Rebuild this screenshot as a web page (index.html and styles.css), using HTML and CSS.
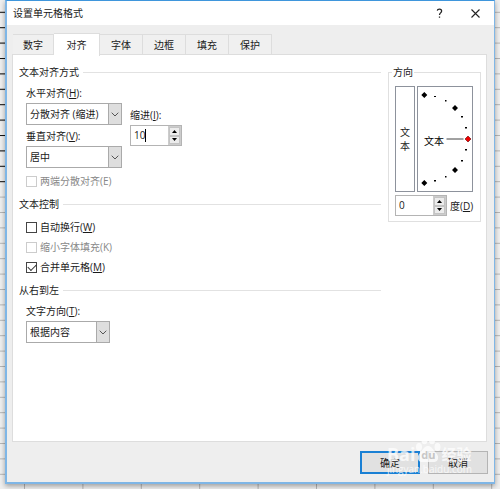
FILE: index.html
```html
<!DOCTYPE html>
<html lang="zh-CN">
<head>
<meta charset="utf-8">
<meta name="viewport" content="width=device-width, initial-scale=1">
<title>设置单元格格式</title>
<link rel="stylesheet" href="styles.css">
</head>
<body>
<svg class="sheet" aria-hidden="true">
  <defs>
    <pattern id="rows" width="60" height="15.4" y="11.8" patternUnits="userSpaceOnUse"><rect width="60" height="1" fill="#b4b4b4"/></pattern>
    <pattern id="bold-rows" width="60" height="15.4" y="11.8" patternUnits="userSpaceOnUse"><rect width="60" height="1" fill="#111"/></pattern>
    <pattern id="cols" width="58.4" height="20" x="24" patternUnits="userSpaceOnUse"><rect width="1" height="20" fill="#b4b4b4"/></pattern>
  </defs>
  <rect width="100%" height="482" fill="url(#rows)"/>
  <rect width="8" height="188" fill="url(#bold-rows)"/>
  <rect y="480" width="100%" height="20" fill="url(#cols)"/>
</svg>
<main class="dialog">
  <header class="titlebar">
    <h1 class="title">设置单元格格式</h1>
    <button class="tool" type="button" aria-label="帮助">
      <svg width="9" height="11" viewBox="0 0 9 11"><path d="M2.3 2.6C2.5.8 6.6.6 6.6 3c0 1.8-2.1 2-2.1 4M4.5 8.4v1.4" fill="none" stroke="#222" stroke-width="1.3"/></svg>
    </button>
    <button class="tool" type="button" aria-label="关闭">
      <svg width="9" height="9" viewBox="0 0 9 9"><path d="M.5.5l8 8M8.5.5l-8 8" fill="none" stroke="#222" stroke-width="1.1"/></svg>
    </button>
  </header>
  <nav class="tabs" role="tablist">
    <button class="tab" role="tab" type="button">数字</button>
    <button class="tab tab-active" role="tab" type="button" aria-selected="true">对齐</button>
    <button class="tab" role="tab" type="button">字体</button>
    <button class="tab" role="tab" type="button">边框</button>
    <button class="tab" role="tab" type="button">填充</button>
    <button class="tab" role="tab" type="button">保护</button>
  </nav>
  <div class="panel">
    <div class="settings">
      <section>
        <h2 class="heading">文本对齐方式</h2>
        <div class="group align">
          <div class="fields">
            <label class="label" for="horizontal">水平对齐(<u>H</u>):</label>
            <div class="combo">
              <select id="horizontal"><option>分散对齐 (缩进)</option></select>
              <span class="combo-arrow"><svg width="8" height="5" viewBox="0 0 8 5"><path d="M.7.7L4 4 7.300.7" fill="none" stroke="#555"/></svg></span>
            </div>
            <label class="label" for="vertical">垂直对齐(<u>V</u>):</label>
            <div class="combo">
              <select id="vertical"><option>居中</option></select>
              <span class="combo-arrow"><svg width="8" height="5" viewBox="0 0 8 5"><path d="M.7.7L4 4 7.300.7" fill="none" stroke="#555"/></svg></span>
            </div>
          </div>
          <div class="indent">
            <label class="label" for="indent">缩进(<u>I</u>):</label>
            <div class="spin">
              <input id="indent" type="text" value="10">
              <span class="caret"></span>
              <span class="spin-buttons">
                <button type="button" aria-label="增加缩进"><svg width="5" height="3" viewBox="0 0 5 3"><path d="M2.500 0L5 3H0z"/></svg></button>
                <button type="button" aria-label="减少缩进"><svg width="5" height="3" viewBox="0 0 5 3"><path d="M0 0h5L2.500 3z"/></svg></button>
              </span>
            </div>
          </div>
          <label class="check check-off"><input type="checkbox" disabled><span>两端分散对齐(E)</span></label>
        </div>
      </section>
      <section>
        <h2 class="heading">文本控制</h2>
        <div class="group checks">
          <label class="check"><input type="checkbox"><span>自动换行(<u>W</u>)</span></label>
          <label class="check check-off"><input type="checkbox" disabled><span>缩小字体填充(K)</span></label>
          <label class="check"><input type="checkbox" checked><span>合并单元格(<u>M</u>)</span></label>
        </div>
      </section>
      <section>
        <h2 class="heading">从右到左</h2>
        <div class="group">
          <label class="label" for="direction">文字方向(<u>T</u>):</label>
          <div class="combo combo-short">
            <select id="direction"><option>根据内容</option></select>
            <span class="combo-arrow"><svg width="8" height="5" viewBox="0 0 8 5"><path d="M.7.7L4 4 7.300.7" fill="none" stroke="#555"/></svg></span>
          </div>
        </div>
      </section>
    </div>
    <fieldset class="orientation">
      <legend>方向</legend>
      <div class="dials">
        <button class="upright" type="button">文<br>本</button>
        <svg class="dial" width="54" height="104" viewBox="418 87 54 104" role="img" aria-label="文本">
          <path d="M446.500 139h17" stroke="#444"/>
          <text x="424" y="145">文本</text>
          <g>
            <path d="M424.300 92l3 3-3 3-3-3zM455 105l3 3-3 3-3-3zM455 167l3 3-3 3-3-3zM424.300 180l3 3-3 3-3-3z"/>
            <path d="M434 96h2v1h-2zM445 100h1.500v1.500H445zM461 116h2v1.500h-2zM465 127h2v1.500h-2zM465 149h2v1.500h-2zM461 160h2v1.500h-2zM445 176h1.500v1.500H445zM434 180h2v1.500h-2z"/>
          </g>
          <path d="M468 136l3 3-3 3-3-3z" fill="#e00" stroke="#600" stroke-width=".6"/>
        </svg>
      </div>
      <div class="degrees">
        <div class="spin">
          <input id="degrees" type="text" value="0">
          <span class="spin-buttons">
            <button type="button" aria-label="增加角度"><svg width="5" height="3" viewBox="0 0 5 3"><path d="M2.500 0L5 3H0z"/></svg></button>
            <button type="button" aria-label="减少角度"><svg width="5" height="3" viewBox="0 0 5 3"><path d="M0 0h5L2.500 3z"/></svg></button>
          </span>
        </div>
        <label for="degrees">度(<u>D</u>)</label>
      </div>
    </fieldset>
  </div>
  <footer class="actions">
    <button class="action action-default" type="button">确定</button>
    <button class="action" type="button">取消</button>
    <div class="watermark">
      <div class="brand">
        <span>Bai</span>
        <span class="paw">
          <svg width="26" height="28" viewBox="0 0 26 28" fill="#fff"><ellipse cx="4" cy="12" rx="3" ry="4"/><ellipse cx="9.500" cy="5" rx="3" ry="4.300"/><ellipse cx="17" cy="5" rx="3" ry="4.300"/><ellipse cx="22.500" cy="12" rx="3" ry="4"/><path d="M13 11c4 0 5 4 8 7 4 4 2 9-2 9H7c-4 0-6-5-2-9 3-3 4-7 8-7z"/></svg>
          <span class="du">du</span>
        </span>
        <span class="brand-cn">经验</span>
      </div>
      <div class="site">jingyan.baidu.com</div>
    </div>
  </footer>
</main>
</body>
</html>
```

FILE: styles.css
```css
* {
  box-sizing: border-box;
}

body {
  margin: 0;
  padding: 0 5px 5px;
  min-height: 100vh;
  display: flex;
  background: #efefef;
  color: #1a1a1a;
  font: 10px/14px "Open Sans", "Noto Sans CJK SC", sans-serif;
}

button,
input,
select {
  margin: 0;
  padding: 0;
  border: 0;
  border-radius: 0;
  color: inherit;
  font: inherit;
}

.sheet {
  position: absolute;
  inset: 0;
  width: 100%;
  height: 100%;
}

.dialog {
  position: relative;
  flex: 1;
  display: flex;
  flex-direction: column;
  background: #eee;
  border: solid #7fb6e6;
  border-width: 1px 1px 2px 2px;
  border-top-color: #3f96dc;
  box-shadow: 0 2px 5px rgba(0, 0, 0, 0.35);
}

.titlebar {
  display: flex;
  align-items: center;
  height: 24px;
  padding: 0 10px 0 6px;
  background: #fff;
}

.title {
  flex: 1;
  margin: 0;
  font-size: 10px;
  font-weight: 400;
}

.tool {
  display: grid;
  place-items: center;
  width: 18px;
  height: 18px;
  background: none;
}

.tool + .tool {
  margin-left: 18px;
}

.tabs {
  display: flex;
  align-items: flex-end;
  height: 30px;
  padding-left: 6px;
}

.tab {
  width: 43px;
  height: 21px;
  background: #f0f0f0;
  border: 1px solid #ddd;
  border-width: 1px 1px 0 0;
}

.tab:first-child {
  width: 41px;
}

.tab-active {
  z-index: 1;
  width: 46px;
  height: 23px;
  margin-bottom: -1px;
  background: #fff;
}

.panel {
  flex: 1;
  display: grid;
  grid-template-columns: 1fr 93px;
  column-gap: 7px;
  align-items: start;
  margin: -1px 7px 0 5px;
  padding: 10px 5px 10px 6px;
  background: #fff;
  border: 1px solid #ddd;
}

.settings {
  display: grid;
  gap: 9px;
}

.heading {
  display: flex;
  align-items: center;
  gap: 4px;
  margin: 0;
  font-size: 10px;
  font-weight: 400;
}

.heading::after {
  content: "";
  flex: 1;
  height: 1px;
  background: #e2e2e2;
}

.group {
  padding: 7px 7px 0;
}

.align {
  display: grid;
  grid-template-columns: 96px 52px;
  column-gap: 8px;
}

.indent {
  padding-top: 22px;
}

.align .check {
  grid-column: 1 / -1;
  margin-top: 6px;
}

.label {
  display: block;
  margin-bottom: 3px;
}

.combo + .label {
  margin-top: 4px;
}

.combo {
  position: relative;
  height: 22px;
}

.combo-short {
  width: 84px;
}

.combo select {
  appearance: none;
  width: 100%;
  height: 100%;
  padding: 0 16px 0 3px;
  background: #fff;
  border: 1px solid #aaa;
}

.combo-arrow {
  position: absolute;
  inset: 0 0 0 auto;
  display: grid;
  place-items: center;
  width: 14px;
  background: #dedede;
  border: 1px solid #aaa;
  pointer-events: none;
}

.spin {
  position: relative;
  display: flex;
  width: 52px;
  height: 21px;
  background: #fff;
  border: 1px solid #b4b4b4;
}

.spin input {
  flex: 1;
  min-width: 0;
  padding: 0 0 2px 3px;
  background: none;
}

.caret {
  position: absolute;
  top: 3px;
  left: 14px;
  width: 1px;
  height: 13px;
  background: #000;
}

.spin-buttons {
  display: grid;
  width: 13px;
  border: 1px solid #ccc;
}

.spin-buttons button {
  display: grid;
  place-items: center;
  min-height: 0;
  background: #ececec;
  border: 1px solid #c4c4c4;
}

.checks {
  display: grid;
  gap: 6px;
  padding-top: 9px;
}

.check {
  display: flex;
  align-items: center;
  gap: 3px;
}

.check input {
  appearance: none;
  display: grid;
  place-items: center;
  width: 11px;
  height: 11px;
  background: #fff;
  border: 1px solid #444;
}

.check input:checked::after {
  content: "";
  width: 7px;
  height: 4px;
  margin-bottom: 2px;
  border: solid #333;
  border-width: 0 0 1px 1px;
  transform: rotate(-45deg);
}

.check-off {
  color: #888;
}

.check-off input {
  border-color: #ccc;
}

.orientation {
  min-width: 0;
  margin: 0;
  padding: 7px 6px 5px;
  border: 1px solid #e0e0e0;
}

.orientation legend {
  margin-left: -3px;
  padding: 0 1px;
}

.dials {
  display: flex;
  gap: 2px;
}

.upright {
  width: 20px;
  height: 106px;
  background: #fff;
  border: 1px solid #8d929c;
}

.dial {
  box-sizing: content-box;
  border: 1px solid #8d929c;
}

.degrees {
  display: flex;
  align-items: center;
  gap: 3px;
  margin-top: 3px;
  white-space: nowrap;
}

.actions {
  position: relative;
  display: flex;
  justify-content: flex-end;
  gap: 8px;
  padding: 9px 6px 8px;
}

.action {
  width: 60px;
  height: 23px;
  background: #e1e1e1;
  border: 1px solid #b4b4b4;
}

.action-default {
  border: 2px solid #1a80d4;
}

.watermark {
  position: absolute;
  right: 22px;
  bottom: 6px;
  color: #fff;
  opacity: 0.75;
  pointer-events: none;
}

.brand {
  display: flex;
  align-items: flex-end;
  font-size: 18px;
  font-weight: 700;
  line-height: 17px;
}

.paw {
  position: relative;
  height: 28px;
}

.paw svg {
  display: block;
}

.du {
  position: absolute;
  inset: auto 0 2px;
  color: #bbb;
  font-size: 11px;
  line-height: 12px;
  text-align: center;
}

.brand-cn {
  font-size: 15px;
}

.site {
  font-size: 10px;
  line-height: 13px;
}
```
